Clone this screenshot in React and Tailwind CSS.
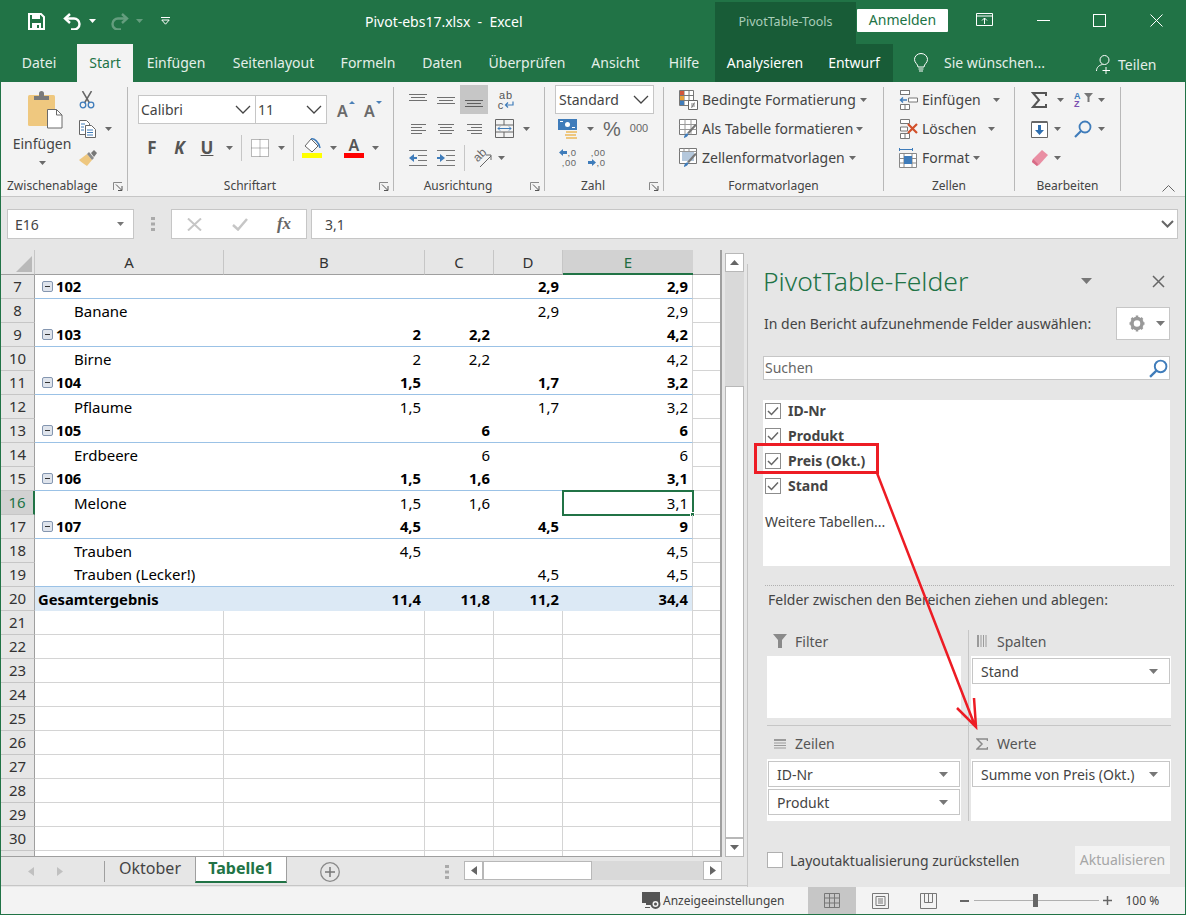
import React from "react";

const S = ({ w, h, children, className = "" }) => (
  <svg width={w} height={h} viewBox={`0 0 ${w} ${h}`} className={"block shrink-0 " + className}>
    {children}
  </svg>
);
const Caret = ({ c = "#6a6a6a", w = 7, h = 4 }) => (
  <S w={w} h={h}><path d={`M0 0h${w}L${w / 2} ${h}z`} fill={c} /></S>
);
const CaretCell = ({ cls }) => <div className={"flex justify-center " + cls}><Caret /></div>;
const Chev = () => (
  <S w={16} h={9}><path d="M1 1l7 7 7-7" fill="none" stroke="#444" strokeWidth="1.3" /></S>
);
const Launcher = () => (
  <S w={10} h={9}>
    <path d="M.5 8V.5H9" fill="none" stroke="#888" />
    <path d="M3 2.5L8.5 8M9 4v4.5H5" fill="none" stroke="#555" />
  </S>
);
const Lines = ({ w = 18, h = 18, l, c = "#707070" }) => (
  <S w={w} h={h}>
    {l.map(([a, b, y], i) => (
      <path key={i} d={`M${a} ${y + 0.5}H${b}`} stroke={c} />
    ))}
  </S>
);

const Save = () => (
  <S w={17} h={17}>
    <path d="M1 1h12l3 3v12H1z" fill="none" stroke="#fff" strokeWidth="2" />
    <path d="M4 1h8v5H4zM4 10h9v6H4z" fill="#fff" />
    <path d="M9 12h2v3H9z" fill="#217346" />
  </S>
);
const Undo = ({ o = 1, flip }) => (
  <S w={19} h={17} className={(flip ? "-scale-x-100 " : "") + (o < 1 ? "opacity-30" : "")}>
    <path d="M7 1L2 5.5 7 10" fill="none" stroke="#fff" strokeWidth="2.4" />
    <path d="M3 5.5h8a5.5 5.5 0 0 1 0 11H8" fill="none" stroke="#fff" strokeWidth="2.4" />
  </S>
);
const Paste = () => (
  <S w={35} h={38}>
    <rect x="0" y="4" width="27" height="31" rx="1.5" fill="#efc87f" />
    <path d="M6 9V5h5V2.5a2 2 0 0 1 5 0V5h5v4z" fill="#7a7a7a" />
    <path d="M19.5 18.5h9l5.5 5.5v13H19.500z" fill="#fff" stroke="#6a6a6a" />
    <path d="M28.500 18.500v5.500H34" fill="none" stroke="#6a6a6a" />
  </S>
);
const Scissors = () => (
  <S w={16} h={18}>
    <path d="M3.500 0l7 12M12.500 0l-7 12" stroke="#666" strokeWidth="1.500" />
    <circle cx="4" cy="14" r="2.800" fill="none" stroke="#3f7cba" strokeWidth="1.300" />
    <circle cx="12" cy="14" r="2.800" fill="none" stroke="#3f7cba" strokeWidth="1.300" />
  </S>
);
const Copy = () => (
  <S w={17} h={18}>
    <path d="M.5.5h7l3 3v11H.5z" fill="#fff" stroke="#666" />
    <path d="M6.500 5.500h6l4 4v8h-10z" fill="#fff" stroke="#666" />
    <path d="M2 4h4M2 7h3M2 10h3M8 10h6M8 12.500h6M8 15h6" stroke="#3f7cba" />
  </S>
);
const Brush = () => (
  <S w={18} h={16}>
    <path d="M0 10L8 4l5 6-5 6c-3-2-6-4-8-6z" fill="#eec77f" />
    <path d="M8 4l5 6 2-2-5-6z" fill="#8a8a8a" />
    <path d="M12 3l3-3 3 3-3 4z" fill="#777" />
  </S>
);
const BigA = ({ small }) => (
  <div className="relative w-[16px] h-[20px]">
    <span className="absolute left-0 top-[0px] text-[16px] leading-[22px] text-[#6a6a6a] font-semibold">A</span>
    <svg width="6" height="4" className={"absolute right-[-2px] top-[1px]"}>
      <path d={small ? "M0 0h6L3 3z" : "M3 0l3 3H0z"} fill="#4a80b8" />
    </svg>
  </div>
);
const BordersIcon = () => (
  <S w={18} h={18}>
    <path d="M.5.5h17v17H.5zM9 .5v17M.5 9h17" fill="#fff" stroke="#777" strokeDasharray="1 1" />
  </S>
);
const Fill = () => (
  <S w={20} h={20}>
    <path d="M9 1l7 7-6 6-7-6z" fill="#fff" stroke="#666" />
    <path d="M9 1c3-1 8 3 9 9" fill="none" stroke="#3f7cba" strokeWidth="1.500" />
    <path d="M0 15h20v5H0z" fill="#ffff00" />
  </S>
);
const Wrap = () => (
  <div className="flex flex-col items-center leading-none">
    <span className="text-[11px] leading-[10px] text-[#555] font-medium tracking-[1px] font-['Liberation_Sans',sans-serif]">ab</span>
    <div className="flex items-center gap-[1px]">
      <span className="text-[11px] leading-[10px] text-[#555] font-medium font-['Liberation_Sans',sans-serif]">c</span>
      <S w={10} h={8}><path d="M9 .5V4H2M4 1.500L1.500 4 4 6.500" fill="none" stroke="#3f7cba" strokeWidth="1.200" /></S>
    </div>
  </div>
);
const Merge = () => (
  <S w={19} h={19}>
    <path d="M.5.5h18v18H.5zM.5 6h18M.5 13h18M9 .5V6M9 13v5.500" fill="none" stroke="#666" />
    <path d="M3 9.500h13M5 7.500l-2 2 2 2M14 7.500l2 2-2 2" fill="none" stroke="#3f7cba" />
  </S>
);
const Indent = ({ rev }) => (
  <S w={18} h={16}>
    <path d="M0 .5h18M9 5.500h9M9 10.500h9M0 15.500h18" stroke="#777" />
    {rev ? (
      <path d="M0 8l5-4v3h3v2H5v3z" fill="#3f7cba" />
    ) : (
      <path d="M8 8L3 4v3H0v2h3v3z" fill="#3f7cba" />
    )}
  </S>
);
const Orient = () => (
  <div className="relative w-[20px] h-[20px]">
    <span className="absolute left-0 top-0 text-[12px] leading-[14px] font-medium text-[#666] -rotate-45 font-['Liberation_Sans',sans-serif]">ab</span>
    <svg width="20" height="20" className="absolute left-0 top-0">
      <path d="M7 19L18 8M13 7h5v5" fill="none" stroke="#666" />
    </svg>
  </div>
);
const Currency = () => (
  <S w={20} h={20}>
    <path d="M0 0h19v11H0z" fill="#3f7cba" />
    <circle cx="9.500" cy="5.500" r="2.500" fill="#fff" />
    <path d="M2 2.500h3M14 8.500h3" stroke="#fff" />
    <path d="M8 12h11v2H8zM7 15h11v2H7zM8 18h11v2H8z" fill="#eec77f" />
  </S>
);
const Decimals = ({ up }) => (
  <div className="flex flex-col text-[9.5px] leading-[9px] text-[#666] font-['Liberation_Sans',sans-serif] tracking-[0.5px] w-[17px]">
    <div className="flex items-center justify-end h-[9px] gap-[1px]">
      {up ? null : <S w={8} h={7}><path d="M0 3.500L4 0v2h4v3H4v2z" fill="#3f7cba" /></S>}
      <span>{up ? ",00" : ",0"}</span>
    </div>
    <div className="flex items-center justify-end h-[9px] mt-[1px] gap-[1px]">
      {up ? <S w={8} h={7}><path d="M8 3.500L4 0v2H0v3h4v2z" fill="#3f7cba" /></S> : null}
      <span>{up ? ",0" : ",00"}</span>
    </div>
  </div>
);
const Cond = () => (
  <S w={19} h={20}>
    <path d="M.5.500h14v15H.5zM5 .5v15M10 .5v15M.5 5.500h14M.5 10.500h14" fill="#fff" stroke="#777" />
    <path d="M1 1h4v4H1z" fill="#d2563b" />
    <path d="M1 6h4v4H1z" fill="#e7a23a" />
    <path d="M1 11h4v4H1z" fill="#3f7cba" />
    <path d="M9.500 10.500h9v9h-9z" fill="#fff" stroke="#666" />
    <path d="M12 14h4M12 16h4M15.500 12.500l-3 5.500" stroke="#666" strokeWidth=".8" />
  </S>
);
const TableFmt = ({ plain }) => (
  <S w={19} h={20}>
    <path d="M.5.500h17v15H.5z" fill="#fff" stroke="#777" />
    {plain ? <path d="M3 4h12v9H3z" fill="#b5c8dc" /> : <path d="M.5 5.500h17M.5 10.500h17M6 .5v15M12 .5v15" stroke="#999" />}
    {plain ? <path d="M.5 3.500h17M5 .5v3M10 .5v3" stroke="#999" /> : null}
    <path d="M18 6l-8 9-2-1 8-9z" fill="#777" />
    <path d="M5 18c1-3 2-4 4-3.500 1 1-.5 3.500-4 4.500z" fill="#3f7cba" />
  </S>
);
const CellIns = () => (
  <S w={19} h={20}>
    <path d="M1.500 .5h9v4h-9zM1.500 14.500h9v5h-9zM6 14.500v5M9.500 8h9v4h-9z" fill="#fff" stroke="#777" />
    <path d="M1 10h7M4 7.500L1.500 10 4 12.500" fill="none" stroke="#3f7cba" strokeWidth="1.400" />
    <path d="M1.500 .5h9v4h-9z" fill="none" stroke="#777" />
  </S>
);
const CellDel = () => (
  <S w={19} h={20}>
    <path d="M1.500 .5h9v4h-9zM1.500 14.500h9v5h-9zM6 14.500v5M1.500 8h7v4h-7z" fill="#fff" stroke="#777" />
    <path d="M9 5l9 9M18 5l-9 9" stroke="#d2502a" strokeWidth="2.200" />
  </S>
);
const CellFmt = () => (
  <S w={19} h={20}>
    <path d="M.5 1.500h13M.5 0v3M13.500 0v3" stroke="#3f7cba" />
    <path d="M.5 5.500h17v14H.5zM.5 10.500h17M.5 15h17M5 5.500v14M13 5.500v14" fill="#fff" stroke="#888" />
    <path d="M5 8h8v8H5z" fill="#3f7cba" />
  </S>
);
const Sigma = () => (
  <S w={16} h={16}><path d="M15 4V1H2l6 7-6 7h13v-3" fill="none" stroke="#555" strokeWidth="2" /></S>
);
const Sort = () => (
  <div className="flex items-start">
    <div className="flex flex-col text-[9px] leading-[8px] font-semibold font-['Liberation_Sans',sans-serif] w-[9px]">
      <span className="text-[#3f7cba]">A</span>
      <span className="text-[#7a4fb0]">Z</span>
    </div>
    <S w={9} h={9} className="ml-[1px] mt-[1px]"><path d="M0 0h9L5.500 4v5h-2V4z" fill="#777" /></S>
  </div>
);
const FillDown = () => (
  <S w={17} h={18}>
    <path d="M.5 2.500h16v15H.5z" fill="#fff" stroke="#666" />
    <path d="M.5 1h16v2H.5z" fill="#666" />
    <path d="M7 5h3v5h3l-4.500 5L4 10h3z" fill="#2f6fb0" />
  </S>
);
const Search = ({ s = 18 }) => (
  <svg width={s} height={s} viewBox="0 0 18 18" className="block shrink-0">
    <circle cx="11" cy="7" r="5.500" fill="none" stroke="#3f7cba" strokeWidth="1.800" />
    <path d="M7 11L1 17" stroke="#3f7cba" strokeWidth="2.200" />
  </svg>
);
const Eraser = () => (
  <S w={17} h={16}>
    <path d="M11 0l6 5-9 10-2 1-5-4 1-3z" fill="#e98ea3" />
    <path d="M2 9l5 5-1 2-5-4z" fill="#d76a85" />
  </S>
);
const Check = ({ c = "#666" }) => (
  <div className="w-[16px] h-[16px] border border-[#8c8c8c] bg-white flex items-center justify-center shrink-0">
    <S w={12} h={10}><path d="M1 5l3.500 3.500L11 1.500" fill="none" stroke={c} strokeWidth="1.500" /></S>
  </div>
);

const Sep = ({ cls = "" }) => <div className={"w-px h-[104px] mt-[5px] bg-[#b8b8b8] shrink-0 " + cls} />;
const Group = ({ w, labelBox, label, launcher, children, labelCls = "justify-center" }) => (
  <div className={"flex flex-col shrink-0 " + w}>
    <div className="h-[95px]">{children}</div>
    <div className="flex items-center h-[18px] relative">
      <div className={"flex text-[12px] text-[#444] " + labelBox + " " + labelCls}>{label}</div>
      {launcher ? <div className="absolute right-[4px] top-[5px]"><Launcher /></div> : null}
    </div>
  </div>
);
const Row = ({ children, cls = "" }) => <div className={"h-[29px] flex items-center " + cls}>{children}</div>;
const C = ({ cls, children }) => <div className={"flex justify-center items-center " + cls}>{children}</div>;

function TitleBar() {
  return (
    <div className="h-[44px] flex text-white shrink-0">
      <div className="w-[364px] flex items-center pb-[2px]">
        <div className="ml-[27px]"><Save /></div>
        <div className="ml-[18px]"><Undo /></div>
        <div className="ml-[7px]"><Caret c="#fff" /></div>
        <div className="ml-[14px]"><Undo flip o={0.3} /></div>
        <div className="ml-[7px] opacity-30"><Caret c="#fff" /></div>
        <div className="ml-[18px]">
          <S w={9} h={8}><path d="M0 .5h9M.8 3h7.400L4.500 7.200z" fill="none" stroke="#fff" /></S>
        </div>
      </div>
      <div className="w-[350px] text-[14px] leading-[44px] whitespace-pre">Pivot-ebs17.xlsx  -  Excel</div>
      <div className="w-[141px] mt-[2px] bg-[#185c37] text-center text-[12.5px] leading-[40px] text-[#a9cdb9]">PivotTable-Tools</div>
      <div className="w-[91px] h-[23px] mt-[9px] ml-[1px] bg-white rounded-[1px] text-[#217346] text-[14px] leading-[22px] text-center">Anmelden</div>
      <div className="ml-[28px] mt-[13px]">
        <S w={18} h={14}>
          <path d="M.5 .5h16v12H.5zM.5 3h16" fill="none" stroke="#fff" />
          <path d="M8.500 11V5M6 7.500l2.500-2.500L11 7.500" fill="none" stroke="#fff" />
        </S>
      </div>
      <div className="ml-[43px] mt-[20px]"><div className="w-[13px] h-px bg-white" /></div>
      <div className="ml-[43px] mt-[14px]"><div className="w-[13px] h-[13px] border border-white" /></div>
      <div className="ml-[44px] mt-[14px]">
        <S w={13} h={13}><path d="M.5 .5l12 12M12.500 .5l-12 12" stroke="#fff" /></S>
      </div>
    </div>
  );
}

const tabW = [
  ["Datei", "w-[76px]"],
  ["Start", "w-[56px]"],
  ["Einfügen", "w-[86px]"],
  ["Seitenlayout", "w-[109px]"],
  ["Formeln", "w-[80px]"],
  ["Daten", "w-[68px]"],
  ["Überprüfen", "w-[102px]"],
  ["Ansicht", "w-[75px]"],
  ["Hilfe", "w-[62px]"],
];
function Tabs() {
  return (
    <div className="h-[38px] flex text-[14px] text-[#e4efe9] shrink-0">
      {tabW.map(([t, w]) => (
        <div key={t} className={"text-center leading-[37px] " + w + (t === "Start" ? " bg-[#f3f3f3] text-[#217346]" : "")}>{t}</div>
      ))}
      <div className="w-[178px] bg-[#185c37] flex text-white">
        <div className="w-[100px] text-center leading-[37px]">Analysieren</div>
        <div className="w-[78px] text-center leading-[37px]">Entwurf</div>
      </div>
      <div className="ml-[20px] mt-[9px]">
        <S w={16} h={20}>
          <path d="M5 14c0-3-3.500-4-3.500-7.500a6.500 6 0 0 1 13 0C14.500 10 11 11 11 14z" fill="none" stroke="#fff" />
          <path d="M5.500 16h5M6 18h4" stroke="#fff" />
        </S>
      </div>
      <div className="ml-[15px] leading-[37px] text-[#e4efe9]">Sie wünschen...</div>
      <div className="ml-[51px] mt-[10px]">
        <S w={17} h={20}>
          <circle cx="8.500" cy="6" r="4.500" fill="none" stroke="#fff" />
          <path d="M.5 17c0-4 3-6 6-6.500M10 13v7M6.500 16.500h7.500" fill="none" stroke="#fff" />
        </S>
      </div>
      <div className="ml-[5px] leading-[41px]">Teilen</div>
    </div>
  );
}

function Combo({ w, text, cls = "" }) {
  return (
    <div className={"h-[29px] border border-[#c6c6c6] bg-white flex items-center justify-between pl-[2px] pr-[4px] text-[14px] text-[#444] shrink-0 " + w + " " + cls}>
      <span>{text}</span>
      <Chev />
    </div>
  );
}

function Ribbon() {
  return (
    <div className="h-[115px] bg-[#f3f3f3] border-b border-[#c6c6c6] flex shrink-0 text-[#444]">
      <Group w="w-[126px]" labelBox="ml-[6px]" labelCls="" label="Zwischenablage" launcher>
        <div className="flex">
          <div className="ml-[9px] w-[64px] flex flex-col items-center">
            <div className="mt-[9px] ml-[6px]"><Paste /></div>
            <div className="text-[14px] leading-[20px] mt-[5px]">Einfügen</div>
            <div className="mt-[7px]"><Caret /></div>
          </div>
          <div className="ml-[5px] flex flex-col">
            <div className="mt-[9px]"><Scissors /></div>
            <div className="mt-[11px] flex items-center"><Copy /><div className="ml-[9px]"><Caret /></div></div>
            <div className="mt-[12px]"><Brush /></div>
          </div>
        </div>
      </Group>
      <Sep />
      <Group w="w-[265px]" labelBox="w-[244px]" label="Schriftart" launcher>
        <div className="pl-[10px] pt-[13px]">
          <div className="flex items-center h-[29px]">
            <Combo w="w-[118px]" text="Calibri" />
            <Combo w="w-[72px]" text="11" cls="-ml-px" />
            <div className="ml-[10px]"><BigA /></div>
            <div className="ml-[11px]"><BigA small /></div>
          </div>
          <div className="flex items-center h-[30px] mt-[9px] text-[17px]">
            <C cls="w-[28px] font-bold text-[#555]">F</C>
            <C cls="w-[27px] font-bold italic text-[#555]">K</C>
            <C cls="w-[28px] font-bold underline text-[#555]">U</C>
            <CaretCell cls="w-[16px]" />
            <div className="ml-[4px] w-px h-[26px] bg-[#c6c6c6]" />
            <C cls="ml-[6px] w-[24px]"><BordersIcon /></C>
            <CaretCell cls="w-[18px]" />
            <div className="ml-[3px] w-px h-[26px] bg-[#c6c6c6]" />
            <div className="ml-[8px]"><Fill /></div>
            <CaretCell cls="w-[22px]" />
            <div className="w-[20px] flex flex-col items-center">
              <span className="text-[16px] leading-[15px] font-semibold text-[#555]">A</span>
              <div className="w-[20px] h-[5px] bg-[#ff0000]" />
            </div>
            <CaretCell cls="w-[22px]" />
          </div>
        </div>
      </Group>
      <Sep />
      <Group w="w-[150px]" labelBox="w-[128px]" label="Ausrichtung" launcher>
        <div className="pl-[10px] pt-[3px]">
          <Row>
            <C cls="w-[28px]"><Lines l={[[0, 18, 3], [2, 16, 6], [0, 18, 9]]} /></C>
            <C cls="w-[28px]"><Lines l={[[0, 18, 6], [2, 16, 9], [0, 18, 12]]} /></C>
            <C cls="w-[28px] h-[29px] bg-[#c6c6c6]"><Lines l={[[0, 18, 9], [2, 16, 12], [0, 18, 15]]} c="#5f5f5f" /></C>
            <C cls="w-[36px]"><Wrap /></C>
          </Row>
          <Row>
            <C cls="w-[28px]"><Lines w={15} l={[[0, 15, 4], [0, 11, 7], [0, 15, 10], [0, 11, 13]]} /></C>
            <C cls="w-[28px]"><Lines w={16} l={[[0, 16, 4], [2, 14, 7], [0, 16, 10], [2, 14, 13]]} /></C>
            <C cls="w-[28px]"><Lines w={15} l={[[0, 15, 4], [4, 15, 7], [0, 15, 10], [4, 15, 13]]} /></C>
            <C cls="w-[32px]"><Merge /></C>
            <CaretCell cls="w-[12px]" />
          </Row>
          <Row>
            <C cls="w-[28px]"><Indent rev /></C>
            <C cls="w-[28px]"><Indent /></C>
            <div className="ml-[4px] w-px h-[26px] bg-[#c6c6c6]" />
            <div className="ml-[8px]"><Orient /></div>
            <CaretCell cls="w-[16px]" />
          </Row>
        </div>
      </Group>
      <Sep />
      <Group w="w-[118px]" labelBox="w-[96px]" label="Zahl" launcher>
        <div className="pl-[10px] pt-[3px]">
          <Combo w="w-[99px]" text="Standard" cls="pl-[3px]" />
          <Row>
            <C cls="w-[26px]"><Currency /></C>
            <CaretCell cls="w-[18px]" />
            <C cls="w-[26px] text-[20px] leading-none font-['Liberation_Sans',sans-serif] text-[#666]">%</C>
            <C cls="w-[28px] text-[11px] text-[#666] font-['Liberation_Sans',sans-serif]">000</C>
          </Row>
          <Row>
            <C cls="w-[26px]"><Decimals /></C>
            <C cls="w-[32px]"><Decimals up /></C>
          </Row>
        </div>
      </Group>
      <Sep />
      <Group w="w-[219px]" labelBox="w-full" label="Formatvorlagen">
        <div className="pl-[15px] pt-[3px] text-[14px]">
          <Row><Cond /><span className="ml-[4px]">Bedingte Formatierung</span><div className="ml-[4px]"><Caret /></div></Row>
          <Row><TableFmt /><span className="ml-[4px]">Als Tabelle formatieren</span><div className="ml-[3px]"><Caret /></div></Row>
          <Row><TableFmt plain /><span className="ml-[4px]">Zellenformatvorlagen</span><div className="ml-[4px]"><Caret /></div></Row>
        </div>
      </Group>
      <Sep />
      <Group w="w-[130px]" labelBox="w-full" label="Zellen">
        <div className="pl-[15px] pt-[3px] text-[14px]">
          <Row><CellIns /><span className="ml-[4px]">Einfügen</span><div className="ml-[12px]"><Caret /></div></Row>
          <Row><CellDel /><span className="ml-[4px]">Löschen</span><div className="ml-[12px]"><Caret /></div></Row>
          <Row><CellFmt /><span className="ml-[4px]">Format</span><div className="ml-[3px]"><Caret /></div></Row>
        </div>
      </Group>
      <Sep />
      <Group w="w-[105px]" labelBox="w-full" label="Bearbeiten">
        <div className="pl-[15px] pt-[3px]">
          <Row>
            <C cls="w-[18px]"><Sigma /></C>
            <CaretCell cls="w-[24px]" />
            <div className="ml-[2px] w-[22px]"><Sort /></div>
            <CaretCell cls="w-[10px]" />
          </Row>
          <Row>
            <C cls="w-[18px]"><FillDown /></C>
            <CaretCell cls="w-[18px]" />
            <div className="ml-[8px] w-[18px]"><Search /></div>
            <CaretCell cls="w-[18px]" />
          </Row>
          <Row>
            <C cls="w-[18px]"><Eraser /></C>
            <CaretCell cls="w-[18px]" />
          </Row>
        </div>
      </Group>
      <Sep />
      <div className="flex-1 flex items-end justify-end pb-[4px] pr-[10px]">
        <S w={13} h={7}><path d="M.5 6.500L6.500 .5l6 6" fill="none" stroke="#666" /></S>
      </div>
    </div>
  );
}

function FormulaBar() {
  return (
    <div className="h-[53px] bg-[#e6e6e6] flex pt-[12px] shrink-0 text-[14px] text-[#444]">
      <div className="ml-[6px] w-[127px] h-[30px] bg-white border border-[#c6c6c6] flex items-center justify-between pl-[7px] pr-[9px]">
        <span>E16</span><Caret c="#777" />
      </div>
      <div className="w-[37px] flex justify-center items-center h-[30px]">
        <S w={4} h={14}><path d="M0 0h4v3H0zM0 5.500h4v3H0zM0 11h4v3H0z" fill="#aaa" /></S>
      </div>
      <div className="w-[136px] h-[30px] bg-white border border-[#c6c6c6] flex items-center">
        <C cls="w-[45px]"><S w={15} h={13}><path d="M1 .5l13 12M14 .5L1 12.500" stroke="#c6c6c6" strokeWidth="2" /></S></C>
        <C cls="w-[45px]"><S w={16} h={13}><path d="M1 7l5 4.500L15 1" fill="none" stroke="#c6c6c6" strokeWidth="2.500" /></S></C>
        <C cls="w-[44px] text-[17px] italic font-['Liberation_Serif',serif] font-bold text-[#666]">fx</C>
      </div>
      <div className="ml-[4px] w-[867px] h-[30px] bg-white border border-[#c6c6c6] flex items-center justify-between pl-[13px] pr-[3px]">
        <span>3,1</span>
        <S w={13} h={8}><path d="M1 1l5.500 5.500L12 1" fill="none" stroke="#666" strokeWidth="2" /></S>
      </div>
    </div>
  );
}

const colW = ["w-[189px]", "w-[201px]", "w-[69px]", "w-[69px]", "w-[130px]"];
const data = [
  [7, "102", "", "", "2,9", "2,9", 1],
  [8, "Banane", "", "", "2,9", "2,9", 0],
  [9, "103", "2", "2,2", "", "4,2", 1],
  [10, "Birne", "2", "2,2", "", "4,2", 0],
  [11, "104", "1,5", "", "1,7", "3,2", 1],
  [12, "Pflaume", "1,5", "", "1,7", "3,2", 0],
  [13, "105", "", "6", "", "6", 1],
  [14, "Erdbeere", "", "6", "", "6", 0],
  [15, "106", "1,5", "1,6", "", "3,1", 1],
  [16, "Melone", "1,5", "1,6", "", "3,1", 0],
  [17, "107", "4,5", "", "4,5", "9", 1],
  [18, "Trauben", "4,5", "", "", "4,5", 0],
  [19, "Trauben (Lecker!)", "", "", "4,5", "4,5", 2],
  [20, "Gesamtergebnis", "11,4", "11,8", "11,2", "34,4", 3],
];

const RowHead = ({ n, sel, tall = "h-[24px]" }) => (
  <div className={"w-[34px] shrink-0 border-b border-[#c6c6c6] text-center text-[15px] font-normal leading-[23px] " + tall + " " +
    (sel ? "bg-[#d2d2d2] border-r-2 border-r-[#217346] text-[#217346]" : "bg-[#e6e6e6] border-r border-r-[#9f9f9f] text-[#333]")}>
    {n}
  </div>
);
const Minus = () => (
  <div className="w-[11px] h-[11px] mr-[3px] ml-[7px] border border-[#8496b0] bg-[#dfe4ec] rounded-[2px] flex items-center justify-center">
    <div className="w-[5px] h-px bg-[#333]" />
  </div>
);

function PivotRow({ r }) {
  const [n, a, b, c, d, e, k] = r;
  const bold = k === 1 || k === 3;
  const line = k === 1 || k === 2 ? "border-b border-[#9bc2e6]" : "";
  const bg = k === 3 ? "bg-[#dce9f5]" : "";
  const weight = bold ? "font-bold text-[14.75px]" : "text-[15px]";
  return (
    <div className="flex h-[24px] text-black">
      <RowHead n={n} sel={n === 16} />
      <div className={"flex items-center " + colW[0] + " " + line + " " + bg + " " + weight}>
        {k === 1 ? <Minus /> : null}
        <span className={k === 1 ? "" : k === 3 ? "pl-[3px]" : "pl-[39px]"}>{a}</span>
      </div>
      {[b, c, d].map((v, i) => (
        <div key={i} className={"flex items-center justify-end pr-[4px] " + colW[i + 1] + " " + line + " " + bg + " " + weight}>{v}</div>
      ))}
      <div className={"relative flex items-center justify-end pr-[4px] border-r border-r-[#d4d4d4] " + colW[4] + " " + line + " " + bg + " " + weight}>
        {e}
        {n === 16 ? (
          <>
            <div className="absolute left-[-1px] top-[-1px] w-[132px] h-[26px] border-2 border-[#217346]" />
            <div className="absolute right-[-3px] bottom-[-2px] w-[5px] h-[5px] bg-[#217346] border border-white" />
          </>
        ) : null}
      </div>
      <div className="flex-1 border-b border-[#d4d4d4]" />
    </div>
  );
}

function EmptyRow({ n, tall = "h-[24px]" }) {
  return (
    <div className={"flex " + tall}>
      <RowHead n={n} tall={tall} />
      {colW.map((w, i) => <div key={i} className={w + " border-r border-b border-[#d4d4d4]"} />)}
      <div className="flex-1 border-b border-[#d4d4d4]" />
    </div>
  );
}

function Grid() {
  const heads = [["A", 0], ["B", 1], ["C", 2], ["D", 3], ["E", 4]];
  return (
    <div className="w-[721px] h-[607px] overflow-hidden bg-white border-r-[2px] border-b-[1px] border-[#9f9f9f]">
      <div className="flex h-[25px] bg-[#e6e6e6] text-[15px] text-[#333]">
        <div className="w-[34px] border-r border-[#c6c6c6] border-b border-b-[#9f9f9f] flex items-end justify-end pr-[2px] pb-[2px]">
          <S w={16} h={16}><path d="M16 0v16H0z" fill="#b9b9b9" /></S>
        </div>
        {heads.map(([h, i]) => (
          <div key={h} className={"text-center leading-[24px] " + colW[i] + (h === "E" ? " bg-[#d2d2d2] border-b-2 border-[#217346] text-[#1e6c41]" : " border-r border-r-[#c6c6c6] border-b border-b-[#9f9f9f]")}>{h}</div>
        ))}
        <div className="flex-1 border-b border-[#9f9f9f]" />
      </div>
      {data.map((r) => <PivotRow key={r[0]} r={r} />)}
      {[21, 22, 23, 24, 25, 26, 27, 28, 29, 30].map((n) => <EmptyRow key={n} n={n} />)}
      <EmptyRow n="" tall="h-[24px]" />
    </div>
  );
}

const SBtn = ({ children, cls = "" }) => (
  <div className={"w-[19px] h-[19px] shrink-0 bg-white border border-[#b8b8b8] flex items-center justify-center " + cls}>{children}</div>
);

function VScroll() {
  return (
    <div className="w-[25px] pl-[3px] pt-[3px] h-[607px] flex flex-col">
      <SBtn><div className="rotate-180"><Caret c="#666" w={9} h={5} /></div></SBtn>
      <div className="h-[114px] w-[19px] bg-[#d9d9d9]" />
      <div className="h-[452px] w-[19px] bg-white border border-[#b8b8b8]" />
      <SBtn><Caret c="#666" w={9} h={5} /></SBtn>
    </div>
  );
}

function SheetTabs() {
  return (
    <div className="h-[29px] bg-[#e6e6e6] border-b border-[#c6c6c6] flex relative">
      <div className="w-[103px] flex items-center">
        <div className="ml-[27px]"><S w={6} h={9}><path d="M6 0v9L0 4.500z" fill="#c0c0c0" /></S></div>
        <div className="ml-[23px]"><S w={6} h={9}><path d="M0 0v9l6-4.500z" fill="#c0c0c0" /></S></div>
      </div>
      <div className="w-px h-[21px] mt-[4px] bg-[#9f9f9f]" />
      <div className="w-[90px] text-center text-[16px] leading-[23px] text-[#444]">Oktober</div>
      <div className="w-[92px] h-[26px] bg-white border-x border-[#9f9f9f] border-b-2 border-b-[#217346] text-center text-[16px] font-bold leading-[23px] text-[#217346]">Tabelle1</div>
      <div className="ml-[33px] mt-[5px]">
        <S w={20} h={20}>
          <circle cx="10" cy="10" r="9.300" fill="none" stroke="#8a8a8a" strokeWidth="1.300" />
          <path d="M10 5v10M5 10h10" stroke="#777" strokeWidth="1.500" />
        </S>
      </div>
      <div className="ml-[105px] mt-[8px]">
        <S w={4} h={14}><path d="M0 0h4v3H0zM0 5.500h4v3H0zM0 11h4v3H0z" fill="#aaa" /></S>
      </div>
      <div className="ml-[15px] mt-[4px] flex h-[19px]">
        <SBtn><S w={6} h={9}><path d="M6 0v9L0 4.500z" fill="#666" /></S></SBtn>
        <div className="w-[109px] h-[19px] bg-white border border-[#b8b8b8]" />
        <div className="w-[111px] h-[19px] bg-[#d9d9d9]" />
        <SBtn><S w={6} h={9}><path d="M0 0v9l6-4.500z" fill="#666" /></S></SBtn>
      </div>
    </div>
  );
}

const FieldRow = ({ t }) => (
  <div className="h-[25px] flex items-center pl-[2px]">
    <Check />
    <span className="ml-[7px] font-bold text-[14px] text-[#444]">{t}</span>
  </div>
);
const Item = ({ t, cls = "" }) => (
  <div className={"h-[26px] bg-white border border-[#c6c6c6] flex items-center justify-between pl-[8px] pr-[11px] text-[14px] text-[#444] " + cls}>
    <span>{t}</span><Caret c="#777" w={9} h={5} />
  </div>
);
const AreaHead = ({ icon, t, h = "h-[26px]", ml = "ml-[5px]", cls = "" }) => (
  <div className={"flex items-center text-[14px] text-[#555] " + h + " " + cls}>
    <div className={"w-[16px] flex justify-center " + ml}>{icon}</div>
    <span className="ml-[7px]">{t}</span>
  </div>
);

function Panel() {
  return (
    <div className="flex-1 bg-[#e6e6e6] pt-[3px]">
      <div className="h-[631px] border-l border-[#c6c6c6] pl-[15px] text-[#444] text-[14px]">
        <div className="flex items-center h-[34px] mt-[11px] w-[407px]">
          <span className="text-[26.5px] font-light text-[#217346] leading-[34px]">PivotTable-Felder</span>
          <div className="ml-auto mr-[60px]"><Caret c="#777" w={11} h={6} /></div>
          <div className="mr-[5px]">
            <S w={13} h={13}><path d="M1 1l11 11M12 1L1 12" stroke="#666" strokeWidth="1.500" /></S>
          </div>
        </div>
        <div className="flex items-center h-[33px] mt-[9px] w-[407px] pl-[1px]">
          <span>In den Bericht aufzunehmende Felder auswählen:</span>
          <div className="ml-auto w-[54px] h-[33px] bg-white border border-[#c6c6c6] flex items-center pl-[12px]">
            <S w={16} h={17}>
              <circle cx="8" cy="8.500" r="5" fill="none" stroke="#999" strokeWidth="3.500" />
              <path d="M8 .5v16M.5 8.500h15M2.500 3l11 11M13.500 3l-11 11" stroke="#999" strokeWidth="2.500" strokeDasharray="3 10" />
            </S>
            <div className="ml-[11px]"><Caret c="#777" w={9} h={5} /></div>
          </div>
        </div>
        <div className="w-[407px] h-[24px] mt-[16px] bg-white border border-[#c6c6c6] flex items-center justify-between pl-[1px] pr-[1px]">
          <span className="text-[#666] pb-[2px]">Suchen</span><Search s={19} />
        </div>
        <div className="w-[407px] h-[166px] mt-[20px] bg-white overflow-hidden">
          <div className="-mt-[2px]">
            <FieldRow t="ID-Nr" />
            <FieldRow t="Produkt" />
            <FieldRow t="Preis (Okt.)" />
            <FieldRow t="Stand" />
            <div className="mt-[13px] pl-[2px]">Weitere Tabellen...</div>
          </div>
        </div>
        <div className="mt-[19px] ml-[2px] w-[409px] h-0 border-t border-dotted border-[#b0b0b0]" />
        <div className="ml-[5px] mt-[3px] h-[22px] leading-[22px]">Felder zwischen den Bereichen ziehen und ablegen:</div>
        <div className="ml-[4px] mt-[19px] w-[404px]">
          <div className="flex h-[95px]">
            <div className="w-[194px]">
              <AreaHead t="Filter" cls="pb-[4px]" icon={<S w={14} h={14}><path d="M0 0h14L9 6v8H5V6z" fill="#8a8a8a" /></S>} />
              <div className="h-[62px] bg-white" />
            </div>
            <div className="ml-[7px] w-px bg-[#c6c6c6]" />
            <div className="ml-[2px] w-[200px]">
              <AreaHead t="Spalten" cls="pb-[4px]" ml="ml-[3px]" icon={<S w={10} h={12}><path d="M0 0h2v12H0zM3.500 0h1v12h-1zM6 0h1v12H6zM8.500 0h1v12h-1z" fill="#9a9a9a" /></S>} />
              <div className="h-[62px] bg-white pt-[2px] px-[1px]"><Item t="Stand" /></div>
            </div>
          </div>
          <div className="h-px bg-[#c6c6c6]" />
          <div className="flex h-[95px]">
            <div className="w-[194px]">
              <AreaHead t="Zeilen" h="h-[33px]" cls="pt-[2px]" icon={<S w={12} h={10}><path d="M0 0h12v2H0zM0 3.500h12v1H0zM0 6h12v1H0zM0 8.500h12v1H0z" fill="#9a9a9a" /></S>} />
              <div className="h-[62px] bg-white pt-[2px] px-[1px] flex flex-col gap-[2px]">
                <Item t="ID-Nr" />
                <Item t="Produkt" />
              </div>
            </div>
            <div className="ml-[7px] w-px bg-[#c6c6c6]" />
            <div className="ml-[2px] w-[200px]">
              <AreaHead t="Werte" h="h-[33px]" cls="pt-[2px]" ml="ml-[3px]" icon={<S w={12} h={12}><path d="M11.500 3V1H1l5 5-5 5h10.500V9" fill="none" stroke="#8a8a8a" strokeWidth="1.500" /></S>} />
              <div className="h-[62px] bg-white pt-[2px] px-[1px]"><Item t="Summe von Preis (Okt.)" /></div>
            </div>
          </div>
        </div>
        <div className="ml-[4px] mt-[25px] w-[403px] h-[28px] flex items-center">
          <div className="w-[16px] h-[16px] bg-white border border-[#b0b0b0]" />
          <span className="ml-[7px]">Layoutaktualisierung zurückstellen</span>
          <div className="ml-auto w-[95px] h-[28px] bg-[#f3f3f3] text-[#a6a6a6] text-center leading-[28px]">Aktualisieren</div>
        </div>
      </div>
    </div>
  );
}

function StatusBar() {
  return (
    <div className="h-[27px] bg-[#f3f3f3] flex items-center text-[12px] text-[#444] shrink-0">
      <div className="ml-[640px]">
        <S w={21} h={17}>
          <path d="M1 0h18v11h-6v2H5v-2H1z" fill="#555" />
          <circle cx="14.500" cy="12" r="4" fill="#f3f3f3" stroke="#555" strokeWidth="2" />
          <circle cx="14.500" cy="12" r="1.500" fill="#555" />
          <path d="M4 15.500h5" stroke="#555" />
        </S>
      </div>
      <span className="ml-[1px]">Anzeigeeinstellungen</span>
      <div className="ml-[24px] w-[48px] h-[27px] bg-[#c6c6c6] flex items-center justify-center">
        <S w={16} h={15}><path d="M.5 .5h15v14H.5zM5.500 .5v14M10.500 .5v14M.5 5h15M.5 10h15" fill="none" stroke="#777" /></S>
      </div>
      <div className="w-[48px] flex justify-center">
        <S w={17} h={16}><path d="M.5 .5h16v15H.5zM4 3.500h9v9H4zM6 6h5M6 8h5M6 10h5" fill="none" stroke="#777" /></S>
      </div>
      <div className="w-[48px] flex justify-center">
        <S w={17} h={16}><path d="M.5 .5h16v15H.5zM4.500 .5v9h8v-9M8.500 .5v9" fill="none" stroke="#777" /></S>
      </div>
      <div className="ml-[8px]"><div className="w-[9px] h-[2px] bg-[#666]" /></div>
      <div className="ml-[5px] w-[125px] h-px bg-[#b0b0b0] relative">
        <div className="absolute left-[59px] top-[-6px] w-[5px] h-[13px] bg-[#666]" />
      </div>
      <div className="ml-[4px]"><S w={9} h={9}><path d="M4.500 0v9M0 4.500h9" stroke="#666" strokeWidth="1.500" /></S></div>
      <span className="ml-[13px]">100 %</span>
    </div>
  );
}

export default function App() {
  return (
    <div className="relative w-[1186px] h-[915px] overflow-hidden bg-[#217346] pl-px pr-px pb-px flex flex-col font-['Noto_Sans','Open_Sans',sans-serif]">
      <TitleBar />
      <Tabs />
      <Ribbon />
      <FormulaBar />
      <div className="flex flex-1 min-h-0">
        <div className="w-[746px] shrink-0 flex flex-col bg-[#e6e6e6]">
          <div className="flex h-[607px]">
            <Grid />
            <VScroll />
          </div>
          <SheetTabs />
        </div>
        <Panel />
      </div>
      <StatusBar />
      <svg width="1186" height="915" className="absolute left-0 top-0 pointer-events-none">
        <rect x="755.500" y="444.500" width="122" height="28" fill="none" stroke="#ed1c24" strokeWidth="3" />
        <path d="M877 473L975 726M957 708L976 727L974 698" fill="none" stroke="#ed1c24" strokeWidth="2.500" />
      </svg>
    </div>
  );
}
